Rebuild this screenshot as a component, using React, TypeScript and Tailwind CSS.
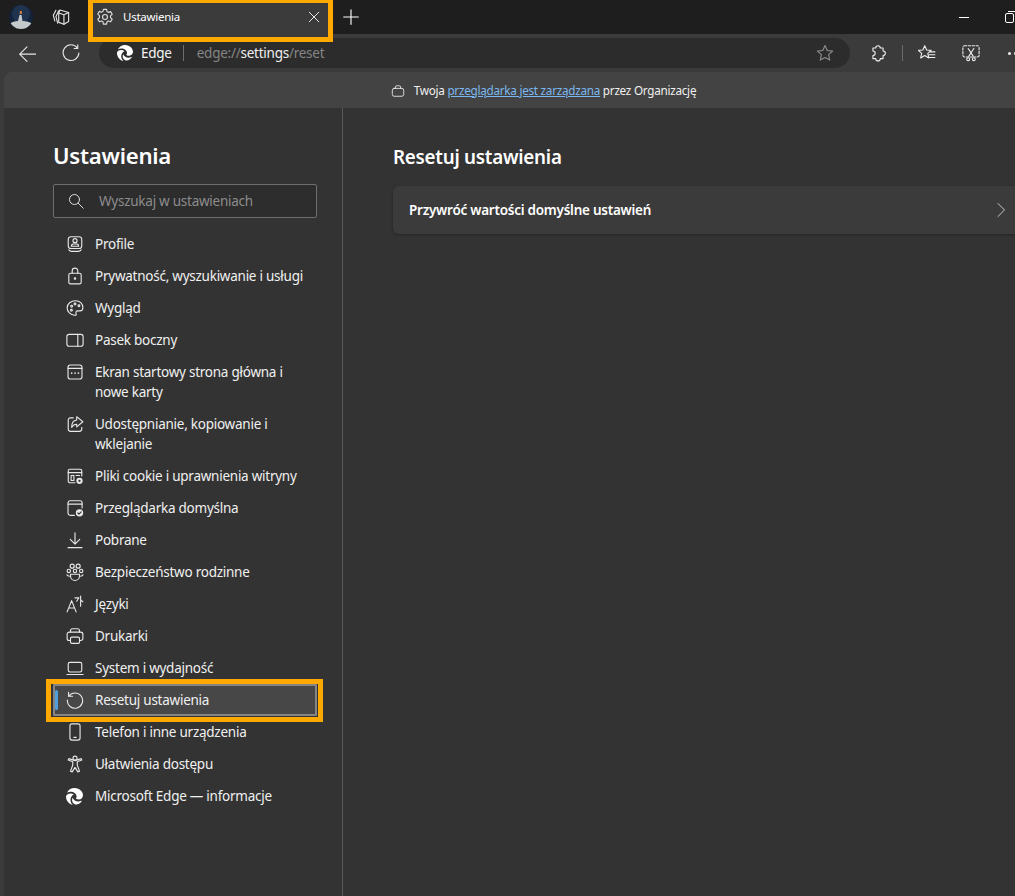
import type { ReactNode } from 'react'
import { FaEdge } from 'react-icons/fa6'

const Icon = ({ children, size = 18, className = '' }: { children: ReactNode; size?: number; className?: string }) => (
  <svg width={size} height={size} viewBox="0 0 16 16" fill="none" stroke="currentColor" strokeWidth={1} strokeLinecap="round" strokeLinejoin="round" className={className}>
    {children}
  </svg>
)

const GEAR = 'M6.6 1.2h2.8l.4 2 1.3.7 1.9-.7 1.4 2.4-1.5 1.4v1.5l1.5 1.4-1.4 2.4-1.9-.7-1.3.7-.4 2H6.6l-.4-2-1.3-.7-1.9.7-1.4-2.4 1.5-1.4V6.8L1.6 5.4 3 3l1.9.7 1.3-.7z'

const navItems: { label: ReactNode; icon: ReactNode; active?: boolean }[] = [
  {
    label: 'Profile',
    icon: (
      <Icon>
        <rect x="2" y="1.5" width="12" height="10.5" rx="2.5" />
        <circle cx="8" cy="5" r="1.8" />
        <path d="M4.8 10c0-1.4.9-2 1.8-2h2.8c.9 0 1.8.6 1.8 2z" />
        <path d="M2.5 13.2c.5 1 1.2 1.3 2.2 1.3h6.6c1 0 1.7-.3 2.2-1.3" />
      </Icon>
    ),
  },
  {
    label: 'Prywatność, wyszukiwanie i usługi',
    icon: (
      <Icon>
        <rect x="2.5" y="5.5" width="11" height="9.5" rx="1.5" />
        <path d="M5.5 5.5V3.5a2.5 2.5 0 0 1 5 0v2" />
        <circle cx="8" cy="10.2" r=".6" fill="currentColor" />
      </Icon>
    ),
  },
  {
    label: 'Wygląd',
    icon: (
      <Icon>
        <path d="M8.5 1.5C4.4 1.5 1 4.3 1 7.8c0 3.4 3 6.4 6.7 6.7 1.3.1 1.7-.7 1.3-1.6-.5-1.2 0-2.3 1.5-2.3h2c1.5 0 2.5-1 2.5-2.8 0-3.6-2.7-6.3-6.5-6.3z" />
        <circle cx="5" cy="6.5" r=".8" />
        <circle cx="8" cy="4.5" r=".8" />
        <circle cx="11.5" cy="6" r=".8" />
        <circle cx="4.8" cy="10" r=".8" />
      </Icon>
    ),
  },
  {
    label: 'Pasek boczny',
    icon: (
      <Icon>
        <rect x=".8" y="3" width="14.4" height="10.5" rx="2" />
        <path d="M10.5 3v10.5" />
      </Icon>
    ),
  },
  {
    label: <>Ekran startowy strona główna i<br />nowe karty</>,
    icon: (
      <Icon>
        <rect x="1.8" y="1.8" width="12.4" height="12.4" rx="2" />
        <path d="M1.8 4.8h12.4" />
        <path d="M5 9h.1M8 9h.1M11 9h.1" strokeWidth={1.4} />
      </Icon>
    ),
  },
  {
    label: <>Udostępnianie, kopiowanie i<br />wklejanie</>,
    icon: (
      <Icon>
        <path d="M6.5 2.5H4a2 2 0 0 0-2 2v8a2 2 0 0 0 2 2h8a2 2 0 0 0 2-2V11" />
        <path d="M9.5 1.5 15 6l-5.500 4.500V8.200C7.500 8.200 6 9.200 5 11c0-3.800 2-6.300 4.500-6.600z" />
      </Icon>
    ),
  },
  {
    label: 'Pliki cookie i uprawnienia witryny',
    icon: (
      <Icon>
        <path d="M8 14H3.500A1.500 1.500 0 0 1 2 12.500v-9A1.500 1.500 0 0 1 3.500 2h9A1.500 1.500 0 0 1 14 3.500V8" />
        <path d="M2 5h12M4.500 7.500h2.500v4.500H4.500zM9 7.500h3" />
        <circle cx="12" cy="12.300" r="2.800" fill="currentColor" stroke="none" />
        <circle cx="12" cy="12.300" r="1" fill="#333333" stroke="none" />
      </Icon>
    ),
  },
  {
    label: 'Przeglądarka domyślna',
    icon: (
      <Icon>
        <path d="M7.500 14.500h-4A1.800 1.800 0 0 1 1.800 12.700V3.300A1.800 1.800 0 0 1 3.500 1.500h9a1.800 1.800 0 0 1 1.800 1.800V8" />
        <path d="M1.800 4.500h12.500" />
        <circle cx="12" cy="12.300" r="3.300" fill="currentColor" stroke="none" />
        <path d="m10.500 12.400 1 1 2-2" stroke="#333333" />
      </Icon>
    ),
  },
  {
    label: 'Pobrane',
    icon: (
      <Icon>
        <path d="M8 1.500v10M3.800 7.500 8 11.700l4.200-4.200M1.800 14.800h12.400" />
      </Icon>
    ),
  },
  {
    label: 'Bezpieczeństwo rodzinne',
    icon: (
      <Icon>
        <circle cx="5.500" cy="2.800" r="1.800" />
        <circle cx="10.800" cy="2.800" r="1.800" />
        <circle cx="2.500" cy="7" r="1.500" />
        <circle cx="13.500" cy="7" r="1.500" />
        <circle cx="8" cy="7" r="1.500" />
        <path d="M4 10h8v1.500a4 4 0 0 1-8 0zM.8 10.500c.5 1 1.200 1.300 2.200 1.300M15.200 10.500c-.5 1-1.200 1.300-2.200 1.300" />
      </Icon>
    ),
  },
  {
    label: 'Języki',
    icon: (
      <Icon>
        <path d="m1 15 4-10 4 10M2.500 11.500h5" />
        <path d="M8 2.500h3.500l-2 3M13 1v9M13 4.500l2 1.500" />
      </Icon>
    ),
  },
  {
    label: 'Drukarki',
    icon: (
      <Icon>
        <path d="M4 4.500V3.300A1.800 1.800 0 0 1 5.800 1.500h4.400A1.800 1.800 0 0 1 12 3.300v1.200" />
        <path d="M4 12H2.800A1.800 1.800 0 0 1 1 10.200V6.500a2 2 0 0 1 2-2h10a2 2 0 0 1 2 2v3.700a1.800 1.800 0 0 1-1.800 1.800H12" />
        <rect x="4" y="9" width="8" height="5.500" rx="1.200" />
      </Icon>
    ),
  },
  {
    label: 'System i wydajność',
    icon: (
      <Icon>
        <rect x="2" y="3" width="12" height="8.500" rx="1.500" />
        <path d="M.8 13.800h14.400" />
      </Icon>
    ),
  },
  {
    label: 'Resetuj ustawienia',
    active: true,
    icon: (
      <Icon>
        <path d="M2.500 4.500A6.800 6.800 0 1 1 1.200 8" />
        <path d="M2.300 1.200v3.500h3.500" />
      </Icon>
    ),
  },
  {
    label: 'Telefon i inne urządzenia',
    icon: (
      <Icon>
        <rect x="3.500" y=".8" width="9" height="14.400" rx="1.800" />
        <path d="M7 12.800h2" />
      </Icon>
    ),
  },
  {
    label: 'Ułatwienia dostępu',
    icon: (
      <Icon>
        <circle cx="8" cy="2.800" r="1.800" />
        <path d="M2 4.500 6 6v3l-2 5.500 1.500.5L8 11l2.500 4 1.500-.5L10 9V6l4-1.500-.5-1.300L8 5 2.500 3.200z" />
      </Icon>
    ),
  },
  {
    label: 'Microsoft Edge — informacje',
    icon: <FaEdge size={17} className="text-white" />,
  },
]

function NavRow({ label, icon, active }: { label: ReactNode; icon: ReactNode; active?: boolean }) {
  return (
    <div className={`relative flex items-start rounded-[1px] py-[6px] pl-[13px] ${active ? 'bg-[#474747] shadow-[inset_0_0_0_2px_#858585]' : ''}`}>
      {active && <div className="absolute left-[2px] top-[6px] h-[20px] w-[3px] rounded-full bg-[#4f9fdc]" />}
      <span className="flex h-5 w-[29px] shrink-0 items-center text-[#e8e8e8]">{icon}</span>
      <span className="text-[13.5px] leading-5 text-[#f0f0f0]">{label}</span>
    </div>
  )
}

export default function App() {
  return (
    <div className="relative h-[896px] w-[1015px] overflow-hidden bg-[#333333] font-['Noto_Sans',sans-serif] tracking-[-0.25px] text-white">
      {/* pasek kart */}
      <div className="flex h-[34px] items-center bg-[#1e1e1e]">
        <div className="ml-[9px] h-6 w-6">
          <svg width="24" height="24" viewBox="0 0 24 24">
            <clipPath id="av"><circle cx="12" cy="12" r="12" /></clipPath>
            <g clipPath="url(#av)">
              <rect width="24" height="24" fill="#14233b" />
              <circle cx="12" cy="9" r="9" fill="#20334f" />
              <path d="M0 19c3-2 6-3 9-3l1.500-6h2l1 6c4 0 7 1 10.500 3v5H0z" fill="#c4cacb" />
              <rect x="10.800" y="6" width="2" height="3" fill="#e08040" />
            </g>
          </svg>
        </div>
        <span className="ml-[19px] text-[#e6e6e6]">
          <Icon>
            <path d="M2.500 11.500 1.200 6.500 3.500 2M5 13.500 3.500 7.500 6 2.500" />
            <path d="M7 1.800 14.800 4v8l-4.200 2.500L6 12.800V4.500z" />
            <path d="m6 4.500 4.600 1.500 4.200-2M10.600 6v8.500" />
          </Icon>
        </span>
        {/* aktywna karta */}
        <div className="ml-[22px] flex h-[34px] w-[238px] shrink-0 items-center self-end rounded-t-md bg-[#3b3b3b] pl-[4px] pr-[9px]">
          <span className="text-[#dedede]">
            <Icon><path d={GEAR} /><circle cx="8" cy="8" r="2.200" /></Icon>
          </span>
          <span className="ml-[9px] flex-1 text-[11.5px] leading-4 text-white">Ustawienia</span>
          <Icon size={14} className="text-white"><path d="m2.500 2.500 11 11M13.500 2.500l-11 11" /></Icon>
        </div>
        <span className="ml-[12px] text-white">
          <Icon><path d="M8 1.500v13M1.500 8h13" /></Icon>
        </span>
        <div className="ml-auto flex items-center">
          <div className="h-px w-[10px] bg-white" />
          <svg width="10" height="12" viewBox="0 0 10 12" fill="none" stroke="#ffffff" className="ml-[36px]">
            <rect x=".5" y="2.500" width="8" height="9" rx="1.500" />
            <path d="M3 .5h7" />
          </svg>
        </div>
      </div>

      {/* pasek narzędzi */}
      <div className="flex h-[38px] items-center bg-[#3b3b3b]">
        <span className="ml-[18px] text-[#e6e6e6]">
          <Icon><path d="M16 9H1.500M8 2.500 1.500 9 8 15.500" /></Icon>
        </span>
        <span className="ml-[26px] text-[#e6e6e6]">
          <Icon><path d="M13.700 3.600A7 7 0 1 0 15 8" /><path d="M14 .8v3.200h-3.200" /></Icon>
        </span>
        <div className="ml-[19px] flex h-[30px] w-[751px] shrink-0 items-center rounded-full bg-[#2c2c2c] pl-[18px] pr-[16px]">
          <FaEdge size={16} className="text-white" />
          <span className="ml-2 text-[13.5px] text-[#f5f5f5]">Edge</span>
          <div className="ml-[11px] h-4 w-px bg-[#6e6e6e]" />
          <span className="ml-[13px] text-[13.5px] text-[#858585]">edge://<span className="text-[#f0f0f0]">settings</span>/reset</span>
          <span className="ml-auto text-[#8c8c8c]">
            <Icon><path d="m8 1.300 2 4.500 4.800.5-3.600 3.200 1 4.800L8 12l-4.200 2.300 1-4.800L1.200 6.300 6 5.800z" /></Icon>
          </span>
        </div>
        <span className="ml-[19px] shrink-0 text-[#ececec]">
          <Icon>
            <path d="M6 3.500a2 2 0 0 1 4 0h2.500v2.700a2 2 0 0 1 0 4v2.800h-2.500a2 2 0 0 1-4 0H3.500v-2.800a2 2 0 0 0 0-4V3.500z" />
          </Icon>
        </span>
        <div className="ml-[15px] h-4 w-px shrink-0 bg-[#6a6a6a]" />
        <span className="ml-[15px] shrink-0 text-[#ececec]">
          <Icon><path d="m6 1.500 1.700 3.800 4 .4-3 2.700.9 4-3.600-2.100-3.600 2.100.9-4-3-2.700 4-.4zM10 7h5M10 9.500h5M8.500 12h6.500" /></Icon>
        </span>
        <span className="ml-[26px] shrink-0 text-[#ececec]">
          <Icon>
            <rect x=".8" y="1.500" width="14.400" height="10" rx="1.500" strokeDasharray="2 1.400" />
            <path d="m5.500 4 4.500 7M10.500 4 6 11" />
            <circle cx="5.500" cy="13.500" r="1.300" />
            <circle cx="10.500" cy="13.500" r="1.300" />
          </Icon>
        </span>
        <div className="ml-[28px] flex shrink-0 gap-[3px]">
          <div className="h-[3px] w-[3px] rounded-full bg-[#ececec]" />
          <div className="h-[3px] w-[3px] rounded-full bg-[#ececec]" />
        </div>
      </div>

      {/* strona */}
      <div className="flex h-[824px] flex-col bg-[#3b3b3b] pl-[4px]">
        <div className="flex h-9 shrink-0 items-center justify-center rounded-tl-lg bg-[#434343] pl-[68px] pt-px text-[11.7px] text-[#f0f0f0]">
          <Icon size={14} className="text-[#ececec]">
            <rect x="1.500" y="5" width="13" height="9" rx="2" />
            <path d="M5 5V3.500A1.500 1.500 0 0 1 6.500 2h3A1.500 1.500 0 0 1 11 3.500V5" />
          </Icon>
          <span className="ml-[9px]">Twoja <span className="text-[#7cb8ef] underline">przeglądarka jest zarządzana</span> przez Organizację</span>
        </div>

        <div className="flex min-h-0 flex-1 bg-[#333333]">
          <aside className="h-full w-[339px] shrink-0 border-r border-[#5a5a5a] pl-[49px] pr-[25px]">
            <h1 className="mt-[30px] text-[22.2px] font-semibold leading-[36px] text-white">Ustawienia</h1>
            <div className="mt-[10px] flex h-[34px] items-center rounded-[2px] border border-[#6e6e6e] bg-[#2d2d2d] pl-[14px]">
              <Icon size={16} className="text-[#e0e0e0]"><circle cx="6.500" cy="6.500" r="5" /><path d="m10.200 10.200 5 5" /></Icon>
              <span className="ml-[15px] text-[13.5px] text-[#8c8c8c]">Wyszukaj w ustawieniach</span>
            </div>
            <nav className="mt-[10px] flex flex-col">
              {navItems.map((item, i) => (
                <NavRow key={i} {...item} />
              ))}
            </nav>
          </aside>

          <main className="min-w-0 flex-1 pl-[50px]">
            <h2 className="mt-[31px] text-[18.8px] font-semibold leading-[36px] text-white">Resetuj ustawienia</h2>
            <div className="mt-[11px] flex h-12 items-center justify-between rounded-l-md bg-[#3b3b3b] pl-4 pr-[6px] shadow-[0_1px_3px_rgba(0,0,0,0.3)]">
              <span className="text-[13.5px] font-semibold text-white">Przywróć wartości domyślne ustawień</span>
              <Icon size={16} className="text-[#c8c8c8]"><path d="m5 1.500 6.500 6.500L5 14.500" /></Icon>
            </div>
          </main>
        </div>
      </div>

      {/* pomarańczowe ramki z instrukcji */}
      <div className="absolute left-[88px] top-0 h-[42px] w-[245px] border-[5px] border-t-[3px] border-[#ffa800]" />
      <div className="absolute left-[46px] top-[679px] h-[43px] w-[277px] border-[5px] border-[#ffa800]" />
    </div>
  )
}
